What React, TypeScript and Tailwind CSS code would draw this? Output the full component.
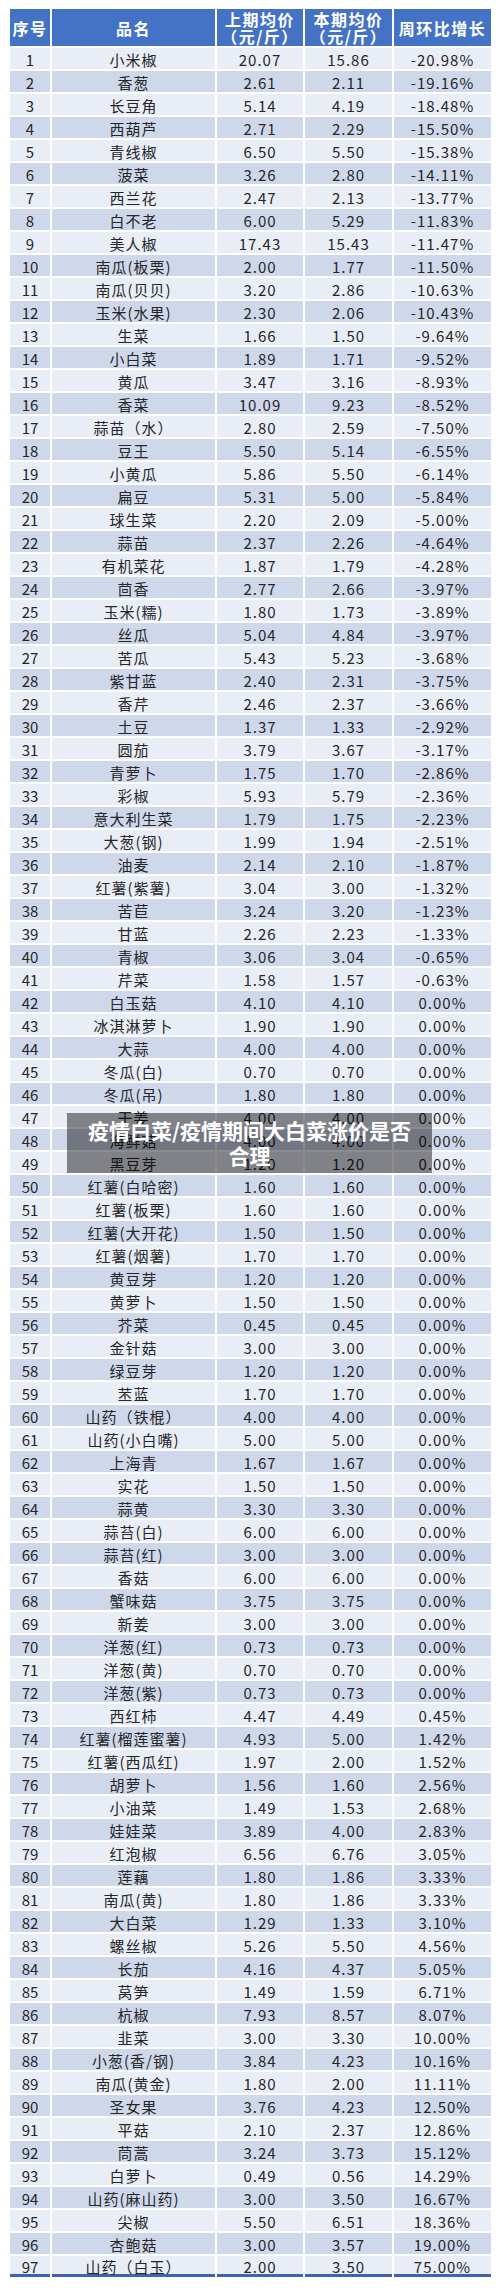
import React from 'react';

type Row = [string, string, string, string];

const rows: Row[] = [
  ['小米椒', '20.07', '15.86', '-20.98%'],
  ['香葱', '2.61', '2.11', '-19.16%'],
  ['长豆角', '5.14', '4.19', '-18.48%'],
  ['西葫芦', '2.71', '2.29', '-15.50%'],
  ['青线椒', '6.50', '5.50', '-15.38%'],
  ['菠菜', '3.26', '2.80', '-14.11%'],
  ['西兰花', '2.47', '2.13', '-13.77%'],
  ['白不老', '6.00', '5.29', '-11.83%'],
  ['美人椒', '17.43', '15.43', '-11.47%'],
  ['南瓜(板栗)', '2.00', '1.77', '-11.50%'],
  ['南瓜(贝贝)', '3.20', '2.86', '-10.63%'],
  ['玉米(水果)', '2.30', '2.06', '-10.43%'],
  ['生菜', '1.66', '1.50', '-9.64%'],
  ['小白菜', '1.89', '1.71', '-9.52%'],
  ['黄瓜', '3.47', '3.16', '-8.93%'],
  ['香菜', '10.09', '9.23', '-8.52%'],
  ['蒜苗（水）', '2.80', '2.59', '-7.50%'],
  ['豆王', '5.50', '5.14', '-6.55%'],
  ['小黄瓜', '5.86', '5.50', '-6.14%'],
  ['扁豆', '5.31', '5.00', '-5.84%'],
  ['球生菜', '2.20', '2.09', '-5.00%'],
  ['蒜苗', '2.37', '2.26', '-4.64%'],
  ['有机菜花', '1.87', '1.79', '-4.28%'],
  ['茴香', '2.77', '2.66', '-3.97%'],
  ['玉米(糯)', '1.80', '1.73', '-3.89%'],
  ['丝瓜', '5.04', '4.84', '-3.97%'],
  ['苦瓜', '5.43', '5.23', '-3.68%'],
  ['紫甘蓝', '2.40', '2.31', '-3.75%'],
  ['香芹', '2.46', '2.37', '-3.66%'],
  ['土豆', '1.37', '1.33', '-2.92%'],
  ['圆茄', '3.79', '3.67', '-3.17%'],
  ['青萝卜', '1.75', '1.70', '-2.86%'],
  ['彩椒', '5.93', '5.79', '-2.36%'],
  ['意大利生菜', '1.79', '1.75', '-2.23%'],
  ['大葱(钢)', '1.99', '1.94', '-2.51%'],
  ['油麦', '2.14', '2.10', '-1.87%'],
  ['红薯(紫薯)', '3.04', '3.00', '-1.32%'],
  ['苦苣', '3.24', '3.20', '-1.23%'],
  ['甘蓝', '2.26', '2.23', '-1.33%'],
  ['青椒', '3.06', '3.04', '-0.65%'],
  ['芹菜', '1.58', '1.57', '-0.63%'],
  ['白玉菇', '4.10', '4.10', '0.00%'],
  ['冰淇淋萝卜', '1.90', '1.90', '0.00%'],
  ['大蒜', '4.00', '4.00', '0.00%'],
  ['冬瓜(白)', '0.70', '0.70', '0.00%'],
  ['冬瓜(吊)', '1.80', '1.80', '0.00%'],
  ['干姜', '4.00', '4.00', '0.00%'],
  ['海鲜菇', '4.00', '4.00', '0.00%'],
  ['黑豆芽', '1.20', '1.20', '0.00%'],
  ['红薯(白哈密)', '1.60', '1.60', '0.00%'],
  ['红薯(板栗)', '1.60', '1.60', '0.00%'],
  ['红薯(大开花)', '1.50', '1.50', '0.00%'],
  ['红薯(烟薯)', '1.70', '1.70', '0.00%'],
  ['黄豆芽', '1.20', '1.20', '0.00%'],
  ['黄萝卜', '1.50', '1.50', '0.00%'],
  ['芥菜', '0.45', '0.45', '0.00%'],
  ['金针菇', '3.00', '3.00', '0.00%'],
  ['绿豆芽', '1.20', '1.20', '0.00%'],
  ['苤蓝', '1.70', '1.70', '0.00%'],
  ['山药（铁棍）', '4.00', '4.00', '0.00%'],
  ['山药(小白嘴)', '5.00', '5.00', '0.00%'],
  ['上海青', '1.67', '1.67', '0.00%'],
  ['实花', '1.50', '1.50', '0.00%'],
  ['蒜黄', '3.30', '3.30', '0.00%'],
  ['蒜苔(白)', '6.00', '6.00', '0.00%'],
  ['蒜苔(红)', '3.00', '3.00', '0.00%'],
  ['香菇', '6.00', '6.00', '0.00%'],
  ['蟹味菇', '3.75', '3.75', '0.00%'],
  ['新姜', '3.00', '3.00', '0.00%'],
  ['洋葱(红)', '0.73', '0.73', '0.00%'],
  ['洋葱(黄)', '0.70', '0.70', '0.00%'],
  ['洋葱(紫)', '0.73', '0.73', '0.00%'],
  ['西红柿', '4.47', '4.49', '0.45%'],
  ['红薯(榴莲蜜薯)', '4.93', '5.00', '1.42%'],
  ['红薯(西瓜红)', '1.97', '2.00', '1.52%'],
  ['胡萝卜', '1.56', '1.60', '2.56%'],
  ['小油菜', '1.49', '1.53', '2.68%'],
  ['娃娃菜', '3.89', '4.00', '2.83%'],
  ['红泡椒', '6.56', '6.76', '3.05%'],
  ['莲藕', '1.80', '1.86', '3.33%'],
  ['南瓜(黄)', '1.80', '1.86', '3.33%'],
  ['大白菜', '1.29', '1.33', '3.10%'],
  ['螺丝椒', '5.26', '5.50', '4.56%'],
  ['长茄', '4.16', '4.37', '5.05%'],
  ['莴笋', '1.49', '1.59', '6.71%'],
  ['杭椒', '7.93', '8.57', '8.07%'],
  ['韭菜', '3.00', '3.30', '10.00%'],
  ['小葱(香/钢)', '3.84', '4.23', '10.16%'],
  ['南瓜(黄金)', '1.80', '2.00', '11.11%'],
  ['圣女果', '3.76', '4.23', '12.50%'],
  ['平菇', '2.10', '2.37', '12.86%'],
  ['茼蒿', '3.24', '3.73', '15.12%'],
  ['白萝卜', '0.49', '0.56', '14.29%'],
  ['山药(麻山药)', '3.00', '3.50', '16.67%'],
  ['尖椒', '5.50', '6.51', '18.36%'],
  ['杏鲍菇', '3.00', '3.57', '19.00%'],
  ['山药（白玉）', '2.00', '3.50', '75.00%'],
];

const grid = 'grid grid-cols-[40px_163px_86px_87px_97px] gap-x-[2px]';

export default function App() {
  return (
    <div
      className="relative w-[500px] min-h-[2288px] bg-white pl-[10px] pt-[9px]"
      style={{ fontFamily: '"Noto Sans CJK SC", "Noto Sans", sans-serif' }}
    >
      <div className="flex w-[481px] flex-col gap-y-[2px]">
        {/* header */}
        <div className={`${grid} h-[37px] text-[16px] font-bold tracking-[1.5px] text-white`}>
          <div className="flex items-center justify-center bg-[#4472c4]">序号</div>
          <div className="flex items-center justify-center bg-[#4472c4]">品名</div>
          <div className="flex flex-col items-center justify-center bg-[#4472c4] leading-[17px]">
            <span>上期均价</span>
            <span>（元/斤）</span>
          </div>
          <div className="flex flex-col items-center justify-center bg-[#4472c4] leading-[17px]">
            <span>本期均价</span>
            <span>（元/斤）</span>
          </div>
          <div className="flex items-center justify-center bg-[#4472c4]">周环比增长</div>
        </div>

        {rows.map((r, i) => {
          const bg = i % 2 === 0 ? 'bg-[#e9edf6]' : 'bg-[#cfd8eb]';
          const last = i === rows.length - 1 ? 'border-b-[3px] border-[#3d65ad]' : '';
          const cell = `flex items-center justify-center pt-[2px] ${bg} ${last}`;
          return (
            <div key={i} className={`${grid} h-[21px] text-[15px] leading-none tracking-[1px] text-[#262626]`}>
              <div className={`${cell} tracking-normal`}>{i + 1}</div>
              <div className={cell}>{r[0]}</div>
              <div className={cell}>{r[1]}</div>
              <div className={cell}>{r[2]}</div>
              <div className={cell}>{r[3]}</div>
            </div>
          );
        })}
      </div>

      {/* watermark caption */}
      <div className="absolute left-[67px] top-[1113px] w-[365px] bg-black/45 px-[18px] py-[5px] text-center text-[21px] font-bold leading-[25px] text-white">
        疫情白菜/疫情期间大白菜涨价是否合理
      </div>
    </div>
  );
}
